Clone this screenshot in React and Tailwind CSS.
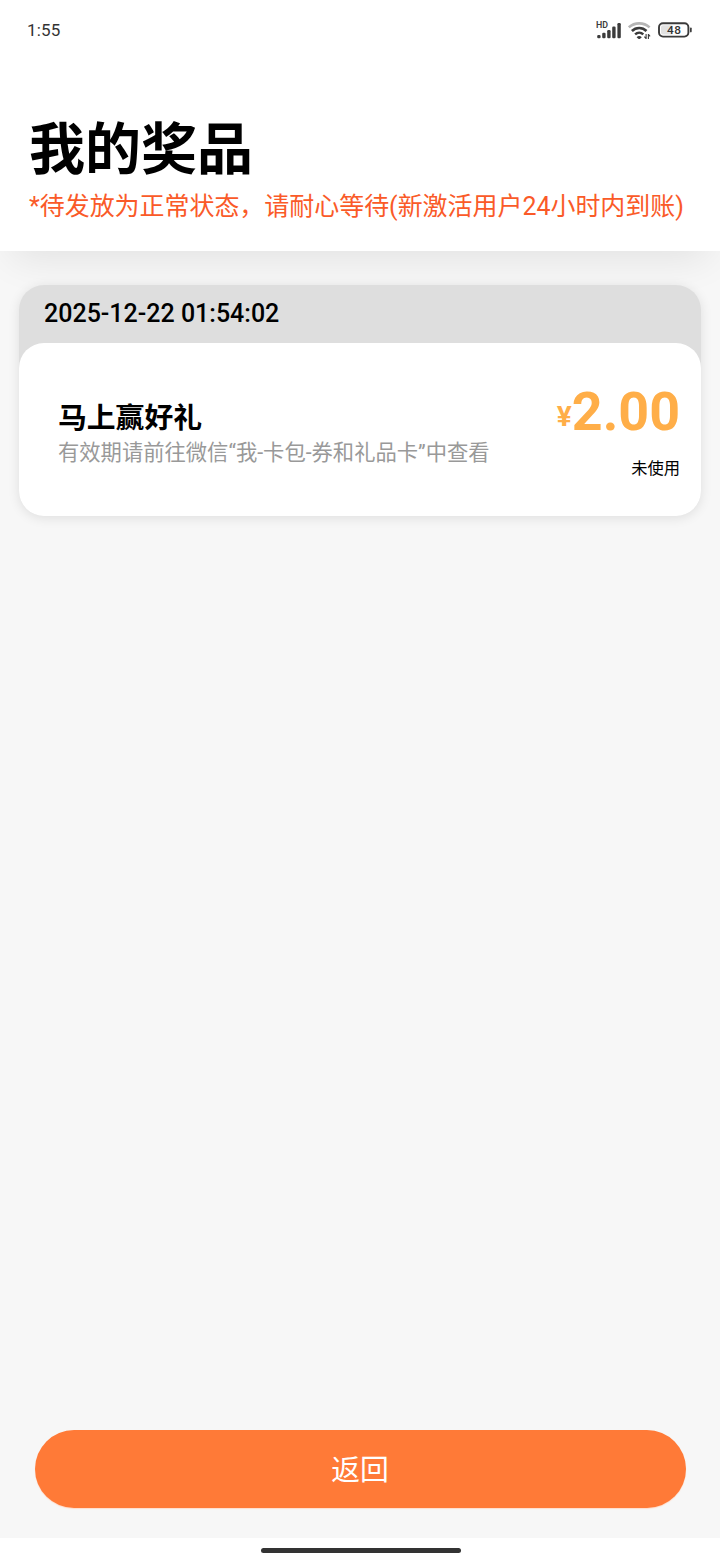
const prizes = [
  {
    id: 1,
    time: "2025-12-22 01:54:02",
    name: "马上赢好礼",
    desc: "有效期请前往微信“我-卡包-券和礼品卡”中查看",
    amount: "2.00",
    status: "未使用",
  },
];

function SignalIcon() {
  return (
    <svg width="26" height="20" viewBox="0 0 26 20" fill="#3b3b3b">
      <text x="0" y="8" fontSize="8.5" fontWeight="600" textLength="12" lengthAdjust="spacingAndGlyphs">
        HD
      </text>
      <rect x="1.2" y="15" width="3.4" height="3.2" rx="1.2" />
      <rect x="6.2" y="12.8" width="3.4" height="5.4" rx="1.2" />
      <rect x="11.2" y="10" width="3.4" height="8.2" rx="1.2" />
      <rect x="16.2" y="6.6" width="3.4" height="11.6" rx="1.2" />
      <rect x="21.4" y="3" width="3.4" height="15.2" rx="1.2" />
    </svg>
  );
}

function WifiIcon() {
  return (
    <svg width="24" height="20" viewBox="0 0 24 20" fill="none">
      <path d="M.8 7.4a15.4 15.4 0 0 1 20.8 0" stroke="#b5b5b5" strokeWidth="2.6" />
      <path d="M3.9 11a10.4 10.4 0 0 1 14.6 0" stroke="#3b3b3b" strokeWidth="2.6" />
      <path d="M7.1 14.3a6 6 0 0 1 8.2 0" stroke="#3b3b3b" strokeWidth="2.4" />
      <path d="M8.6 17.2a3.8 3.8 0 0 1 5.2 0l-1.7 1.5a1.4 1.4 0 0 1-1.8 0z" fill="#3b3b3b" />
      <path d="M18.1 14v5M18.1 18.6l-1.7-1.9M20.4 19v-5M20.4 14.4l1.7 1.9" stroke="#3b3b3b" strokeWidth="1.1" />
    </svg>
  );
}

function BatteryIcon() {
  return (
    <svg width="36" height="18" viewBox="0 0 36 18">
      <rect x="2" y="2.2" width="29.4" height="13.4" rx="4" fill="#fff" stroke="#3b3b3b" strokeWidth="1.9" />
      <path d="M6 4.2h9.4v9.4H6a2 2 0 0 1-2-2V6.2a2 2 0 0 1 2-2z" fill="#e2e2e2" />
      <rect x="33" y="6.4" width="1.7" height="5" rx=".8" fill="#3b3b3b" />
      <text x="17.2" y="13.1" fontSize="11.8" fontWeight="500" textAnchor="middle" letterSpacing=".6" fill="#333">
        48
      </text>
    </svg>
  );
}

function StatusBar() {
  return (
    <div className="flex h-[60px] items-center justify-between px-[27px]">
      <span className="pt-px text-[17px] tracking-[0.2px] text-[#333]">1:55</span>
      <div className="flex items-center">
        <SignalIcon />
        <span className="ml-[6px]">
          <WifiIcon />
        </span>
        <span className="ml-[5px]">
          <BatteryIcon />
        </span>
      </div>
    </div>
  );
}

function PrizeCard({ prize }) {
  return (
    <div className="rounded-[25px] bg-[#dedede] shadow-[0_2px_12px_rgba(0,0,0,0.1)]">
      <div className="flex h-[58px] items-center pl-[25px] text-[25px] font-medium">
        {prize.time}
      </div>
      <div className="flex h-[173px] justify-between rounded-[25px] bg-white pl-[39px] pr-[21px]">
        <div className="pt-[56px]">
          <h2 className="text-[28.8px] leading-[38px] font-bold">{prize.name}</h2>
          <p className="text-[21.3px] leading-[32px] text-[#999]">{prize.desc}</p>
        </div>
        <div className="flex flex-col items-end pt-[37px]">
          <p className="flex items-baseline font-bold leading-[63px] text-[#ffae48]">
            <span className="relative -top-1 text-[28px]">¥</span>
            <span className="text-[53.8px]">{prize.amount}</span>
          </p>
          <p className="pt-[5px] text-[16.3px] leading-[24px]">{prize.status}</p>
        </div>
      </div>
    </div>
  );
}

export default function App() {
  return (
    <div className="flex h-[1560px] w-[720px] flex-col overflow-hidden bg-[#f7f7f7] font-['Roboto','Noto_Sans_CJK_SC',sans-serif] text-black">
      <header className="h-[251px] shrink-0 bg-white shadow-[0_19px_38px_-12px_rgba(0,0,0,0.09)]">
        <StatusBar />
        <div className="pl-[29px] pt-[52px]">
          <h1 className="text-[56px] leading-[76px] font-bold">我的奖品</h1>
          <p className="text-[24.96px] leading-[38px] whitespace-nowrap text-[#fa5a28]">
            *待发放为正常状态，请耐心等待(新激活用户24小时内到账)
          </p>
        </div>
      </header>

      <main className="flex-1 px-[19px] pt-[34px]">
        {prizes.map((prize) => (
          <PrizeCard key={prize.id} prize={prize} />
        ))}
      </main>

      <div className="px-[34.5px] pb-[30px]">
        <button className="block h-[78px] w-full rounded-full bg-[#ff7a37] pt-[3px] text-[28.8px] text-white shadow-[0_1px_1px_#ffdccb]">
          返回
        </button>
      </div>
      <div className="flex h-[22px] justify-center bg-white pt-[10px]">
        <div className="ml-[2px] h-[5px] w-[200px] rounded-full bg-[#333]" />
      </div>
    </div>
  );
}
